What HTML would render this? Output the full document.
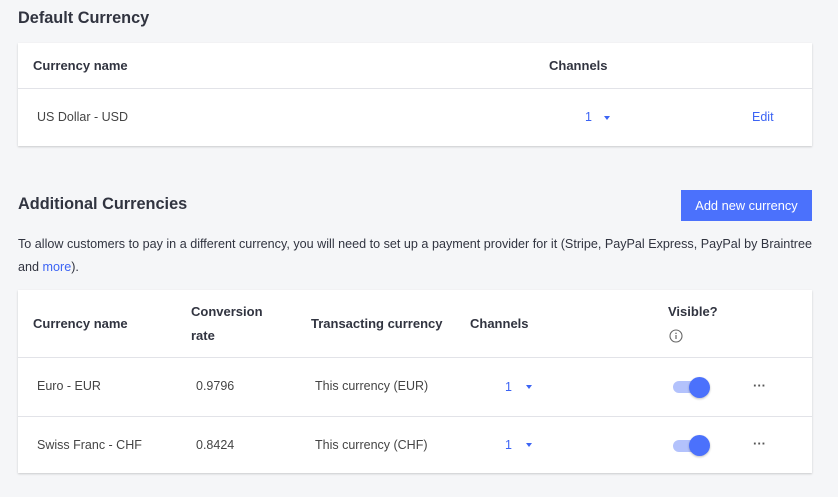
<!DOCTYPE html><html><head><style>
body{margin:0;width:838px;height:497px;background:#f5f6f8;font-family:"Liberation Sans",sans-serif;position:relative;overflow:hidden;color:#313440}
.a{position:absolute;white-space:nowrap;line-height:1}
.card{position:absolute;background:#fff;box-shadow:0 1px 2px rgba(0,0,0,.18)}
.h{font-weight:bold;font-size:13px;color:#313440}
.t{font-size:12.5px;color:#444}
.b{color:#3c64f4}
.line{position:absolute;left:0;right:0;height:1px;background:#e2e3e8}
.car{width:0;height:0;border-left:3px solid transparent;border-right:3px solid transparent;border-top:4px solid #3c64f4}
.tr{position:absolute;width:30px;height:12px;border-radius:6px;background:#b3c2fc}
.kn{position:absolute;width:21px;height:21px;border-radius:50%;background:#4b71fc;box-shadow:0 1px 2px rgba(0,0,0,.25)}
.dots{font-size:13px;font-weight:bold;color:#555}
</style></head><body>
<div class="a" style="left:18px;top:10px;font-size:16.3px;font-weight:bold;color:#313440">Default Currency</div>
<div class="card" style="left:18px;top:43px;width:794px;height:103px">
<div class="line" style="top:45px"></div></div>
<div class="a h" style="left:33px;top:59px">Currency name</div>
<div class="a h" style="left:549px;top:59px">Channels</div>
<div class="a t" style="left:37px;top:111px">US Dollar - USD</div>
<div class="a t b" style="left:585px;top:111px">1</div>
<div class="a car" style="left:604px;top:116px"></div>
<div class="a t b" style="left:752px;top:111px">Edit</div>

<div class="a" style="left:18px;top:196px;font-size:16.3px;font-weight:bold">Additional Currencies</div>
<div class="a" style="left:681px;top:190px;width:131px;height:31px;background:#4b71fc;color:#fff;font-size:12.8px;line-height:31px;text-align:center">Add new currency</div>
<div class="a" style="left:18px;top:238px;font-size:12.6px;color:#313440">To allow customers to pay in a different currency, you will need to set up a payment provider for it (Stripe, PayPal Express, PayPal by Braintree</div>
<div class="a" style="left:18px;top:261px;font-size:12.6px;color:#313440">and <span class="b">more</span>).</div>

<div class="card" style="left:18px;top:290px;width:794px;height:183px">
<div class="line" style="top:67px"></div><div class="line" style="top:126px"></div></div>
<div class="a h" style="left:33px;top:317px">Currency name</div>
<div class="a h" style="left:191px;top:305px">Conversion</div>
<div class="a h" style="left:191px;top:329px">rate</div>
<div class="a h" style="left:311px;top:317px">Transacting currency</div>
<div class="a h" style="left:470px;top:317px">Channels</div>
<div class="a h" style="left:668px;top:305px">Visible?</div>
<svg class="a" style="left:669px;top:329px" width="14" height="14" viewBox="0 0 14 14"><circle cx="7" cy="7" r="6" fill="none" stroke="#666" stroke-width="1.1"/><rect x="6.4" y="6" width="1.2" height="4" fill="#666"/><circle cx="7" cy="4.2" r=".75" fill="#666"/></svg>

<div class="a t" style="left:37px;top:380px">Euro - EUR</div>
<div class="a t" style="left:196px;top:380px">0.9796</div>
<div class="a t" style="left:315px;top:380px">This currency (EUR)</div>
<div class="a t b" style="left:505px;top:381px">1</div>
<div class="a car" style="left:526px;top:385px"></div>
<div class="tr" style="left:673px;top:381px"></div><div class="kn" style="left:689px;top:377px"></div>
<div class="a dots" style="left:753px;top:379px">···</div>

<div class="a t" style="left:37px;top:439px">Swiss Franc - CHF</div>
<div class="a t" style="left:196px;top:439px">0.8424</div>
<div class="a t" style="left:315px;top:439px">This currency (CHF)</div>
<div class="a t b" style="left:505px;top:439px">1</div>
<div class="a car" style="left:526px;top:443px"></div>
<div class="tr" style="left:673px;top:440px"></div><div class="kn" style="left:689px;top:435px"></div>
<div class="a dots" style="left:753px;top:437px">···</div>
</body></html>
